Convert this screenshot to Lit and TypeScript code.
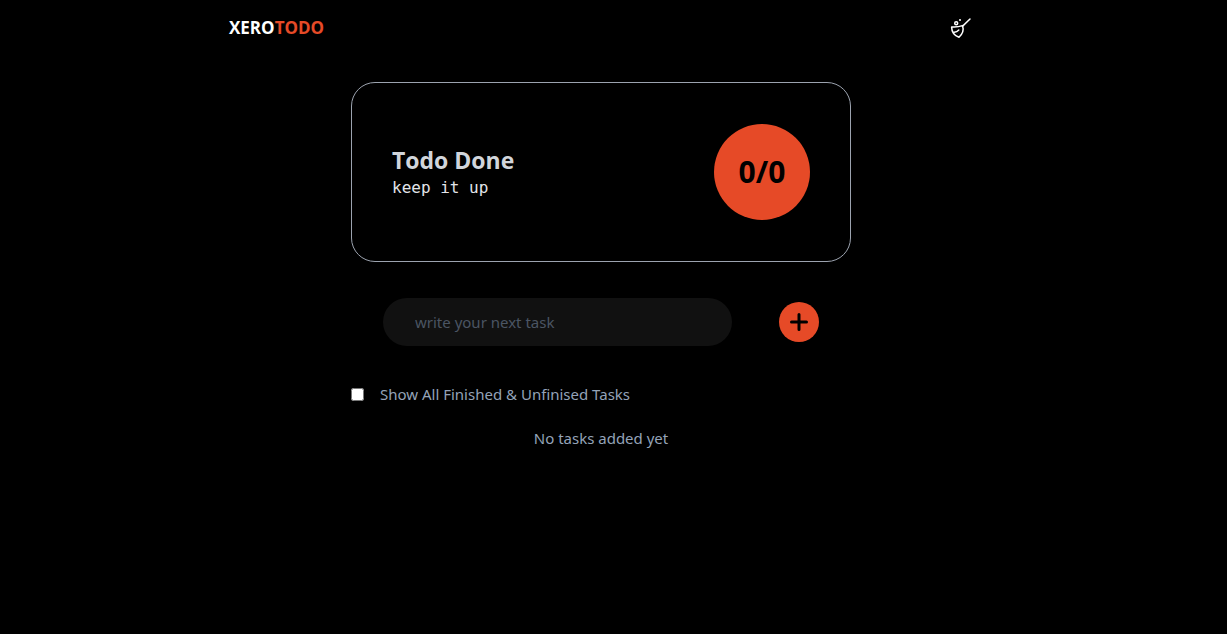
import { LitElement, html, css } from "lit";
import { customElement, state } from "lit/decorators.js";

@customElement("app-root")
export class AppRoot extends LitElement {
  @state() private showAll = false;

  static styles = css`
    :host {
      display: block;
      box-sizing: border-box;
      min-height: 100vh;
      padding-right: 25px;
      background: #000;
      color: #94a3b8;
      font: 15px/24px "Noto Sans", "Open Sans", sans-serif;
    }
    * { box-sizing: border-box; margin: 0; }
    .header {
      display: flex;
      align-items: center;
      justify-content: space-between;
      max-width: 744px;
      height: 56px;
      margin: 0 auto;
    }
    .logo {
      color: #fff;
      font: 700 17px/28px "Open Sans", "Noto Sans", sans-serif;
      text-decoration: none;
    }
    .accent { color: #e64a27; }
    button {
      display: grid;
      place-items: center;
      padding: 0;
      border: 0;
      cursor: pointer;
    }
    .clear { width: 24px; height: 24px; background: none; color: #fff; }
    .main { max-width: 500px; margin: 26px auto 0; }
    .card {
      display: flex;
      align-items: center;
      justify-content: space-between;
      padding: 41px 40px;
      border: 1px solid #9ca3af;
      border-radius: 24px;
      color: #d1d5db;
    }
    .title { font: 700 23px/32px "Open Sans", "Noto Sans", sans-serif; }
    .note { font: 16px/24px "DejaVu Sans Mono", monospace; color: #e2e4e9; }
    .count {
      display: grid;
      place-items: center;
      width: 96px;
      height: 96px;
      border-radius: 50%;
      background: #e64a27;
      color: #000;
      font-size: 30px;
      line-height: 36px;
      font-weight: 700;
    }
    .form {
      display: flex;
      align-items: center;
      justify-content: space-between;
      gap: 47px;
      padding: 36px 32px;
    }
    .field {
      flex: 1;
      min-width: 0;
      height: 48px;
      padding: 0 32px;
      border: 0;
      border-radius: 24px;
      background: #111;
      color: #d1d5db;
      font: inherit;
    }
    .field::placeholder { color: #4b5563; opacity: 1; }
    .add { width: 40px; height: 40px; border-radius: 50%; background: #e64a27; color: #000; }
    .filter { display: flex; align-items: center; gap: 16px; }
    .check { width: 13px; height: 13px; }
    .empty { margin-top: 20px; text-align: center; }
  `;

  render() {
    return html`
      <header class="header">
        <a class="logo" href="#">XERO<span class="accent">TODO</span></a>
        <button class="clear" aria-label="Clear tasks">
          <svg width="24" height="24" viewBox="0 0 24 24" fill="none" stroke="currentColor" stroke-width="1.5" stroke-linecap="round" stroke-linejoin="round">
            <path d="M21 3l-7.6 7.4" />
            <path d="M2.6 10.9c3.7.4 7.5-.1 10.9-1.3 1.3 3.9.2 8.4-3.5 11.7-4.5-1.7-7.3-5.700-7.400-10.400z" />
            <path d="M4.9 16.2c1.900.1 3.700-.8 4.900-2.200" />
            <circle cx="7.2" cy="7.2" r="1.5" />
            <path d="M11 4h.01" stroke-width="2" />
          </svg>
        </button>
      </header>
      <main class="main">
        <section class="card">
          <div>
            <h1 class="title">Todo Done</h1>
            <p class="note">keep it up</p>
          </div>
          <div class="count">0/0</div>
        </section>
        <form class="form" @submit=${(e: Event) => e.preventDefault()}>
          <input class="field" type="text" aria-label="Next task" placeholder="write your next task" />
          <button class="add" aria-label="Add task">
            <svg width="24" height="24" viewBox="0 0 24 24" fill="none" stroke="currentColor" stroke-width="3" stroke-linecap="round">
              <path d="M12 4.5v15M4.5 12h15" />
            </svg>
          </button>
        </form>
        <div class="filter">
          <input class="check" id="show-all" type="checkbox" .checked=${this.showAll}
            @change=${(e: Event) => (this.showAll = (e.target as HTMLInputElement).checked)} />
          <label for="show-all">Show All Finished &amp; Unfinised Tasks</label>
        </div>
        <p class="empty">No tasks added yet</p>
      </main>
    `;
  }
}
